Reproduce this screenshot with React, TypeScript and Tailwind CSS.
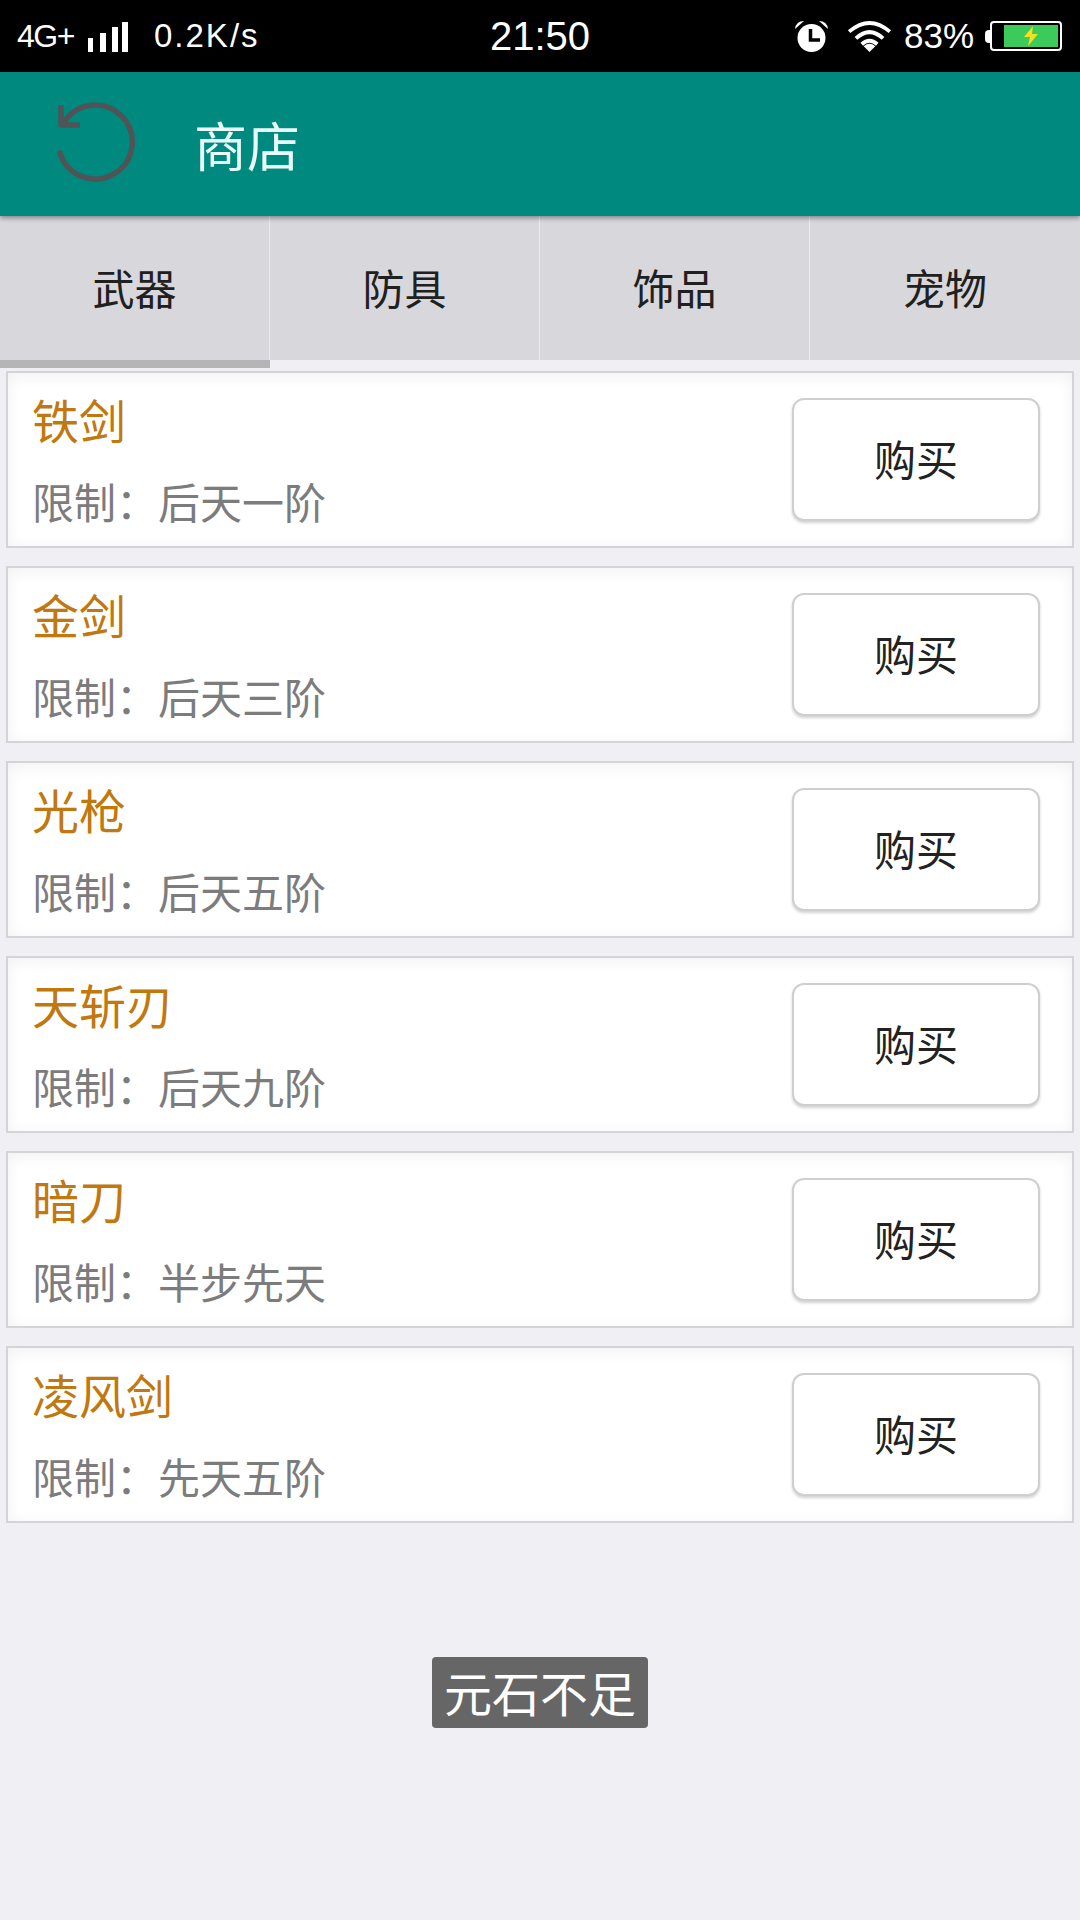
import React from 'react';

const CJK = { fontFamily: '"Noto Sans CJK SC", sans-serif' };

const tabs = ['武器', '防具', '饰品', '宠物'];

const items = [
  { name: '铁剑', limit: '后天一阶' },
  { name: '金剑', limit: '后天三阶' },
  { name: '光枪', limit: '后天五阶' },
  { name: '天斩刃', limit: '后天九阶' },
  { name: '暗刀', limit: '半步先天' },
  { name: '凌风剑', limit: '先天五阶' },
];

const StatusBar = () => (
  <div className="flex h-[72px] shrink-0 items-center bg-black pl-[17px] text-white" style={{ fontFamily: '"Liberation Sans", sans-serif' }}>
    <span className="w-[60px] whitespace-nowrap text-[32px] tracking-[-1.5px]">4G+</span>
    <svg width="40" height="30" viewBox="0 0 40 30" className="ml-[11px] mt-[2px]" fill="#fff">
      <rect x="0" y="16" width="5" height="14" />
      <rect x="12" y="11" width="6" height="19" />
      <rect x="24" y="5" width="6" height="25" />
      <rect x="34" y="0" width="6" height="30" />
    </svg>
    <span className="ml-[26px] w-[100px] whitespace-nowrap text-[33px] font-light tracking-[2px]">0.2K/s</span>
    <span className="ml-[236px] w-[100px] text-[40px] leading-none">21:50</span>
    <svg width="33" height="32" viewBox="0 0 33 32" className="ml-[205px]">
      <circle cx="16.5" cy="18" r="14" fill="#fff" />
      <path d="M0 9 Q1 1 9 1 Z M33 9 Q32 1 24 1 Z" fill="#fff" />
      <path d="M15.5 9 V20 H25" stroke="#000" strokeWidth="3.5" fill="none" />
    </svg>
    <svg width="45" height="32" viewBox="0 0 46 33" className="ml-[19px]" fill="none" stroke="#fff" strokeWidth="4">
      <path d="M2 12 Q23 -6 44 12" />
      <path d="M9 19 Q23 6 37 19" />
      <path d="M15 25 Q23 18 31 25" />
      <path d="M17 27 L23 33 L29 27 Q23 22 17 27 Z" fill="#fff" stroke="none" />
    </svg>
    <span className="ml-[12px] w-[71px] whitespace-nowrap text-[35px] font-light">83%</span>
    <div className="ml-[10px] flex items-center">
      <div className="h-[13px] w-[5px] rounded-l-[4px] bg-white" />
      <div className="flex h-[30px] w-[72px] justify-end rounded-[4px] border-2 border-white p-[2px]">
        <div className="flex w-[54px] items-center justify-center bg-[#3ccb5a]">
          <svg width="16" height="20" viewBox="0 0 16 20">
            <path d="M10 0 L1 11 H7 L5 20 L15 8 H9 Z" fill="#f5e020" />
          </svg>
        </div>
      </div>
    </div>
  </div>
);

const AppBar = () => (
  <div className="relative z-10 flex h-[144px] shrink-0 items-center bg-[#00897f] shadow-[0_2px_5px_rgba(0,0,0,0.4)]">
    <svg width="84" height="84" viewBox="0 0 84 84" className="mb-[8px] ml-[53px]" fill="none" stroke="#4f5556" strokeWidth="5.5" strokeLinecap="round" strokeLinejoin="round">
      <path d="M10 26 A37 37 0 1 1 7 55" />
      <path d="M8 7 V27 H27" strokeLinecap="butt" />
    </svg>
    <span className="ml-[57px] text-[53px] leading-none text-[#e8fbf8]" style={CJK}>商店</span>
  </div>
);

const TabBar = () => (
  <div className="flex h-[152px] shrink-0">
    {tabs.map((tab, i) => (
      <div key={tab} className="flex flex-1 flex-col">
        <div className={`flex h-[144px] items-center justify-center bg-[#d7d7dc] pb-[4px] text-[42px] text-[#202020] ${i < 3 ? 'border-r border-[#ebebef]' : ''}`} style={CJK}>
          {tab}
        </div>
        {i === 0 && <div className="h-[8px] bg-[#b5b5b8]" />}
      </div>
    ))}
  </div>
);

const ItemCard = ({ name, limit }: { name: string; limit: string }) => (
  <div className="flex h-[177px] items-center justify-between border-2 border-[#d3d3d8] bg-white pl-[24px] pr-[32px] shadow-[inset_0_3px_16px_rgba(0,0,0,0.06)]">
    <div style={CJK}>
      <div className="text-[47px] leading-[60px] text-[#c0780f]">{name}</div>
      <div className="mt-[22px] text-[42px] leading-[60px] text-[#7c7c7c]">限制：{limit}</div>
    </div>
    <button className="flex h-[123px] w-[248px] items-center justify-center rounded-[12px] border-2 border-[#cfcfcf] bg-white pb-[4px] text-[42px] text-[#222] shadow-[0_2px_3px_rgba(0,0,0,0.18)]" style={CJK}>
      购买
    </button>
  </div>
);

export default function App() {
  return (
    <div className="relative flex h-[1920px] w-[1080px] flex-col overflow-hidden bg-[#efeff4]">
      <StatusBar />
      <AppBar />
      <TabBar />
      <div className="flex flex-col gap-[18px] pl-[6px] pr-[6px] pt-[3px]">
        {items.map((item) => (
          <ItemCard key={item.name} name={item.name} limit={item.limit} />
        ))}
      </div>
      {/* toast */}
      <div className="absolute left-[432px] top-[1657px] flex h-[71px] w-[216px] items-center justify-center rounded-[4px] bg-[#666666] pb-[4px] text-[48px] text-white" style={CJK}>
        元石不足
      </div>
    </div>
  );
}
